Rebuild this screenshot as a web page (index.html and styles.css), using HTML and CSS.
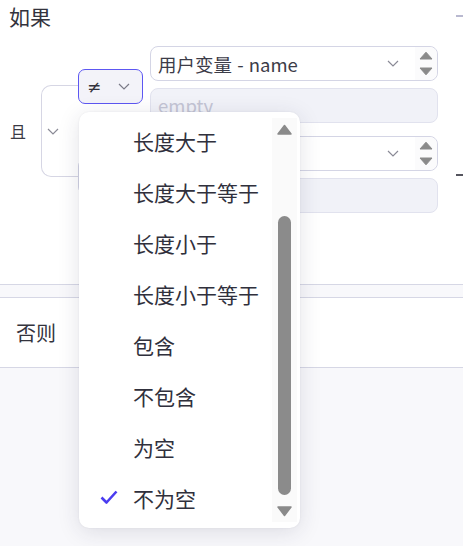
FILE: index.html
```html
<!DOCTYPE html>
<html lang="zh">
<head>
<meta charset="utf-8">
<link rel="stylesheet" href="styles.css">
</head>
<body>
<div class="page">
  <div class="if-head">
    <span class="title">如果</span>
    <span class="dash dash-light"></span>
  </div>
  <div class="group">
    <span class="logic">且</span>
    <div class="bracket">
      <svg class="chev" width="12" height="7" viewBox="0 0 12 7"><path d="M1 1l5 5 5-5" fill="none" stroke="#8a8a96" stroke-width="1.2"/></svg>
    </div>
    <div class="conds">
      <div class="cond">
        <div class="op op-active">
          <span class="op-sign">≠</span>
          <svg width="12" height="7" viewBox="0 0 12 7"><path d="M1 1l5 5 5-5" fill="none" stroke="#7a7a88" stroke-width="1.2"/></svg>
        </div>
        <div class="fields">
          <div class="select">
            <span class="sel-text">用户变量 - name</span>
            <svg class="sel-chev" width="12" height="7" viewBox="0 0 12 7"><path d="M1 1l5 5 5-5" fill="none" stroke="#8a8a96" stroke-width="1.2"/></svg>
            <span class="spin">
              <svg width="14" height="9" viewBox="0 0 14 9"><path d="M7 1.2L13 8H1z" fill="#8a8a8a" stroke="#8a8a8a" stroke-linejoin="round"/></svg>
              <svg width="14" height="9" viewBox="0 0 14 9"><path d="M1 1h12L7 7.8z" fill="#8a8a8a" stroke="#8a8a8a" stroke-linejoin="round"/></svg>
            </span>
          </div>
          <div class="input">empty</div>
        </div>
        <span class="dash-slot"></span>
      </div>
      <div class="cond">
        <div class="op">
          <span class="op-sign"></span>
          <svg width="12" height="7" viewBox="0 0 12 7"><path d="M1 1l5 5 5-5" fill="none" stroke="#7a7a88" stroke-width="1.2"/></svg>
        </div>
        <div class="fields">
          <div class="select">
            <span class="sel-text"></span>
            <svg class="sel-chev" width="12" height="7" viewBox="0 0 12 7"><path d="M1 1l5 5 5-5" fill="none" stroke="#8a8a96" stroke-width="1.2"/></svg>
            <span class="spin">
              <svg width="14" height="9" viewBox="0 0 14 9"><path d="M7 1.2L13 8H1z" fill="#8a8a8a" stroke="#8a8a8a" stroke-linejoin="round"/></svg>
              <svg width="14" height="9" viewBox="0 0 14 9"><path d="M1 1h12L7 7.8z" fill="#8a8a8a" stroke="#8a8a8a" stroke-linejoin="round"/></svg>
            </span>
          </div>
          <div class="input"></div>
        </div>
        <span class="dash-slot"><span class="dash dash-dark"></span></span>
      </div>
    </div>
  </div>
  <div class="band"></div>
  <div class="else-row">否则</div>
  <div class="rest"></div>

  <div class="dropdown">
    <ul class="options">
      <li class="opt">长度大于</li>
      <li class="opt">长度大于等于</li>
      <li class="opt">长度小于</li>
      <li class="opt">长度小于等于</li>
      <li class="opt">包含</li>
      <li class="opt">不包含</li>
      <li class="opt">为空</li>
      <li class="opt selected">
        <svg class="check" width="18" height="14" viewBox="0 0 18 14"><path d="M1.5 7.5l5 5L16.5 1.5" fill="none" stroke="#4a3cf0" stroke-width="2.6" stroke-linejoin="round"/></svg>
        不为空
      </li>
    </ul>
    <div class="scrollbar">
      <svg width="15" height="11" viewBox="0 0 15 11"><path d="M7.5 1.5L14 10H1z" fill="#8a8a8a" stroke="#8a8a8a" stroke-width="1.5" stroke-linejoin="round"/></svg>
      <div class="thumb"></div>
      <svg width="15" height="11" viewBox="0 0 15 11"><path d="M1 1h13L7.5 9.5z" fill="#8a8a8a" stroke="#8a8a8a" stroke-width="1.5" stroke-linejoin="round"/></svg>
    </div>
  </div>
</div>
</body>
</html>
```

FILE: styles.css
```css
* { box-sizing: border-box; }
html, body {
  margin: 0;
  padding: 0;
  background: #ffffff;
  overflow: hidden;
}
body {
  font-family: "Noto Sans CJK SC", "Noto Sans", sans-serif;
  color: #33333d;
  width: 463px;
  height: 546px;
}
.page {
  position: relative;
  width: 463px;
  height: 546px;
  display: flex;
  flex-direction: column;
  overflow: hidden;
}
.if-head {
  display: flex;
  justify-content: space-between;
  align-items: flex-start;
  padding: 2px 0 0 9px;
  height: 46px;
  flex: none;
}
.title {
  font-size: 21px;
  line-height: 28px;
  color: #33333d;
}
.dash {
  display: block;
  width: 10px;
  height: 2px;
  margin-right: -3px;
  flex: none;
}
.dash-light {
  margin-top: 13px;
  background: #b9b9d0;
}
.dash-dark {
  background: #55555f;
}
.group {
  display: flex;
  align-items: center;
  height: 167px;
  flex: none;
}
.group > * { flex: none; }
.logic {
  font-size: 16px;
  line-height: 22px;
  width: 41px;
  padding-left: 10px;
  margin-top: 3px;
  color: #3a3a44;
}
.bracket {
  width: 38px;
  height: 92px;
  margin-top: 3px;
  border: 1px solid #d6d6e4;
  border-right: none;
  border-radius: 10px 0 0 10px;
  display: flex;
  align-items: center;
  padding-left: 5px;
}
.conds {
  margin-left: -1px;
  display: flex;
  flex-direction: column;
  gap: 13px;
}
.cond {
  display: flex;
  align-items: center;
  gap: 7px;
}
.cond > * { flex: none; }
.op {
  width: 65px;
  height: 35px;
  margin-top: 4px;
  border: 1px solid #d4d5e5;
  border-radius: 7px;
  background: #f3f3f9;
  display: flex;
  align-items: center;
  justify-content: space-between;
  padding: 0 12px 0 8px;
}
.op-active {
  border-color: #5d57f2;
}
.op-sign {
  font-family: "DejaVu Sans", sans-serif;
  font-size: 17px;
  line-height: 20px;
  color: #33333d;
}
.fields {
  width: 288px;
  display: flex;
  flex-direction: column;
  gap: 7px;
}
.select {
  height: 35px;
  border: 1px solid #d4d5e5;
  border-radius: 8px;
  background: #fff;
  display: flex;
  align-items: center;
  padding-left: 7px;
}
.sel-text {
  flex: 1;
  font-size: 18.5px;
  line-height: 24px;
  color: #3c3c48;
  word-spacing: 1px;
}
.sel-chev {
  margin-right: 16px;
}
.spin {
  width: 22px;
  height: 33px;
  background: #fbfbfc;
  border-radius: 0 8px 8px 0;
  display: flex;
  flex-direction: column;
  justify-content: space-between;
  align-items: center;
  padding: 4px 0 4px;
}
.spin svg { display: block; }
.input {
  height: 35px;
  border: 1px solid #e1e2ee;
  border-radius: 8px;
  background: #f1f2f8;
  padding-left: 7px;
  font-size: 18.5px;
  line-height: 33px;
  color: #c4c5d4;
}
.dash-slot {
  width: 20px;
  margin-left: 11px;
}
.band {
  flex: none;
  margin-top: 71px;
  height: 14px;
  border-top: 1px solid #d6d7e5;
  border-bottom: 1px solid #d6d7e5;
  background: #f8f8fb;
}
.else-row {
  flex: none;
  height: 69px;
  display: flex;
  align-items: center;
  padding-left: 16px;
  font-size: 20px;
  color: #33333d;
}
.rest {
  flex: 1;
  border-top: 1px solid #d6d7e5;
  background: #f8f8fb;
}
.dropdown {
  position: absolute;
  left: 79px;
  top: 112px;
  width: 221px;
  height: 416px;
  background: #ffffff;
  border-radius: 10px;
  box-shadow: 0 4px 22px rgba(40, 40, 70, 0.13), 0 0 2px rgba(40, 40, 70, 0.08);
  display: flex;
  padding: 6px 3px 6px 0;
}
.options {
  list-style: none;
  margin: 0;
  padding: 0;
  padding-top: 0;
  margin-top: -3px;
  flex: 1;
}
.opt {
  position: relative;
  height: 51px;
  display: flex;
  align-items: center;
  padding-left: 54px;
  font-size: 21px;
  color: #30303c;
}
.check {
  position: absolute;
  left: 21px;
  top: 18px;
}
.scrollbar {
  width: 25px;
  background: #fafafa;
  display: flex;
  flex-direction: column;
  align-items: center;
  padding: 6px 0 4px;
}
.scrollbar svg { display: block; }
.thumb {
  width: 13px;
  height: 279px;
  margin: 81px 0 11px;
  background: #8b8b8b;
  border-radius: 7px;
}
```
